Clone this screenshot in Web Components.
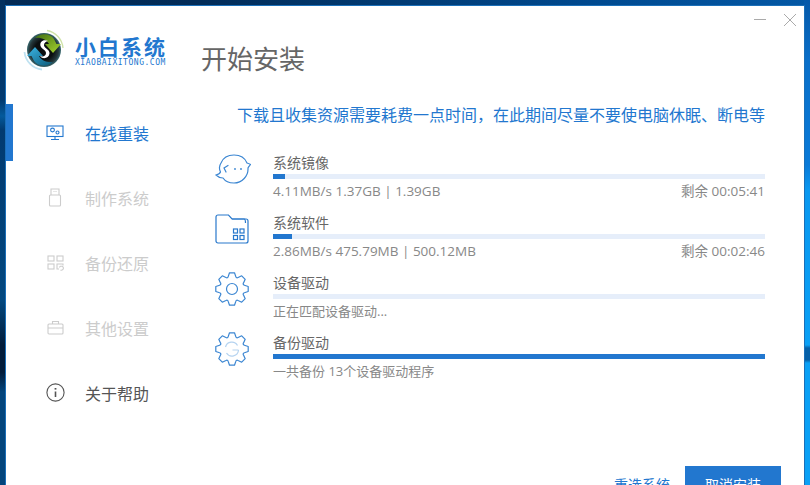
<!DOCTYPE html>
<html lang="zh">
<head>
<meta charset="utf-8">
<title>小白系统</title>
<style>
  html, body { margin: 0; height: 100%; overflow: hidden; }
  body {
    height: 485px;
    box-sizing: border-box;
    padding: 5px 5px 0 5px;
    font-family: "Open Sans", "Noto Sans CJK SC", sans-serif;
    background:
      linear-gradient(180deg, #0558a8 0, #0a6fc9 60px, #0a7ad8 165px, #0a98f0 190px, #0aa0f5 345px, #0560a8 348px, #0560a8 360px, #0aa0f5 363px) right top / 6px 100% no-repeat,
      linear-gradient(180deg, #03305f 0, #023a70 100px, #045a9c 116px, #023a70 130px, #03487f 300px, #021c3a 345px, #021c3a 372px, #03457c 392px) left top / 5px 100% no-repeat,
      linear-gradient(90deg, #032a55 0, #022c58 200px, #004a90 600px, #0458a5 100%);
  }
</style>
</head>
<body>
<installer-window>
  <side-nav slot="nav">
    <nav-item active label="在线重装" icon="screen"></nav-item>
    <nav-item disabled label="制作系统" icon="usb"></nav-item>
    <nav-item disabled label="备份还原" icon="blocks"></nav-item>
    <nav-item disabled label="其他设置" icon="case"></nav-item>
    <nav-item label="关于帮助" icon="info"></nav-item>
  </side-nav>
  <task-row label="系统镜像" icon="face" progress="2.4" info="4.11MB/s 1.37GB | 1.39GB" remain="剩余 00:05:41"></task-row>
  <task-row label="系统软件" icon="folder" progress="3.9" info="2.86MB/s 475.79MB | 500.12MB" remain="剩余 00:02:46"></task-row>
  <task-row label="设备驱动" icon="gear" progress="0" info="正在匹配设备驱动..."></task-row>
  <task-row label="备份驱动" icon="gear-sync" progress="100" info="一共备份 13个设备驱动程序"></task-row>
</installer-window>

<script>
// eight teeth, same outline for both gear icons
function gearSvg(inner) {
  const pt = (a, r) => (17 + r * Math.cos(a)).toFixed(1) + ' ' + (17 + r * Math.sin(a)).toFixed(1);
  let d = '';
  for (let i = 0; i < 8; i++) {
    const a = (i * 45 - 90) * Math.PI / 180;
    d += (i ? 'L' : 'M') + pt(a - 0.3, 13) + 'L' + pt(a - 0.15, 16.4) + 'L' + pt(a + 0.15, 16.4) + 'L' + pt(a + 0.3, 13);
    d += 'Q' + pt(a + Math.PI / 8, 11.4) + ' ' + pt(a + Math.PI / 4 - 0.3, 13);
  }
  return `<svg width="34" height="34" viewBox="0 0 34 34" fill="none" stroke="#3b86d2" stroke-width="1.2" stroke-linejoin="round">
    <path d="${d}Z"/>${inner}</svg>`;
}

const ICONS = {
  screen: `<svg width="18" height="16" viewBox="0 0 18 16" fill="none" stroke="currentColor" stroke-width="1.1">
    <rect x="1" y="1" width="16" height="10.5"/><circle cx="6.5" cy="5" r="1.9"/><circle cx="11.5" cy="7.5" r="1.5"/><path d="M9 11.5V14.5M5 14.5H13"/></svg>`,
  usb: `<svg width="14" height="19" viewBox="0 0 14 19" fill="none" stroke="currentColor" stroke-width="1.1">
    <path d="M3 7V1H11V7"/><rect x="1.5" y="7" width="11" height="11" rx="1"/><path d="M5.5 3.5H6.5M7.5 3.5H8.5"/></svg>`,
  blocks: `<svg width="17" height="16" viewBox="0 0 17 16" fill="none" stroke="currentColor" stroke-width="1.1">
    <rect x="1" y="1" width="6" height="5"/><rect x="10" y="1" width="6" height="5"/><rect x="1" y="9" width="6" height="5"/><path d="M16 10.5V9H10V14H12"/><path d="M13.5 15a2 2 0 1 0 -1-2.5"/></svg>`,
  case: `<svg width="17" height="15" viewBox="0 0 17 15" fill="none" stroke="currentColor" stroke-width="1.1">
    <rect x="1" y="4" width="15" height="10" rx="1"/><path d="M5.5 4V1.5H11.5V4M1 8H16"/></svg>`,
  info: `<svg width="19" height="19" viewBox="0 0 19 19" fill="none" stroke="currentColor" stroke-width="1.1">
    <circle cx="9.5" cy="9.5" r="8.6"/><path d="M9.5 8.5V14" stroke-width="1.6"/><path d="M9.5 5V6.6" stroke-width="1.8"/></svg>`,
  face: `<svg width="36" height="30" viewBox="0 0 36 30" fill="none" stroke="#3b86d2" stroke-width="1.2">
    <path d="M6 9C8 4 13 1 19 1C25 1 30 4 32 9C33.5 9.5 35 10 35.5 10.5C34.5 12 33.5 13 33 14C33.5 22 27 29 19 29C14 29 10 27 8 24C5.5 24 3 23 1 21C3 20.5 5 19.5 5.5 18C4 15 4 12 6 9Z"/>
    <path d="M13 11.5L9 14L11 18" stroke-linecap="round"/><circle cx="20" cy="15" r=".9" fill="#3b86d2" stroke="none"/><circle cx="26" cy="15" r=".9" fill="#3b86d2" stroke="none"/></svg>`,
  folder: `<svg width="34" height="30" viewBox="0 0 34 30" fill="none" stroke="#2878cc" stroke-width="1.2">
    <path d="M1 3C1 1.8 1.8 1 3 1H13.5L17 5H31C32.2 5 33 5.8 33 7V27C33 28.2 32.2 29 31 29H3C1.8 29 1 28.2 1 27Z"/>
    <path d="M17 5H29C30 5 30.5 6 30.5 9"/>
    <rect x="18.5" y="15" width="4" height="4"/><rect x="25" y="15" width="4" height="4"/><rect x="18.5" y="21.5" width="4" height="4"/><rect x="25" y="21.5" width="4" height="4"/></svg>`,
  gear: gearSvg(`<circle cx="17" cy="17" r="5.5"/>`),
  'gear-sync': gearSvg(`<path d="M10.5 15A6.5 6.5 0 0 1 22.5 13.5" stroke="#b5d3f0"/><path d="M23.5 18H17.5M23.5 18A6.5 6.5 0 0 1 11.5 21" stroke="#b5d3f0"/>`)
};

class InstallerWindow extends HTMLElement {
  constructor() {
    super();
    this.attachShadow({ mode: 'open' });
    this.shadowRoot.innerHTML = `
      <style>
        :host {
          display: grid;
          grid-template-columns: 195px 1fr;
          height: 500px;
          background: #fff;
          border: 1px solid #1b6fb8;
          box-sizing: border-box;
          color: #666;
        }
        .brand { display: flex; align-items: center; gap: 9px; padding: 22px 0 0 16px; height: 44px; }
        .brand-text { color: #2277cf; display: flex; flex-direction: column; }
        .brand-name { font: 700 21px/24px "Noto Sans CJK SC", sans-serif; letter-spacing: 2px; }
        .brand-url { font: 8px/9px "DejaVu Sans Mono", monospace; letter-spacing: .53px; white-space: nowrap; }
        .main { padding: 0 39px 0 0; display: flex; flex-direction: column; }
        .title-row { display: flex; justify-content: space-between; height: 71px; }
        h1 { margin: 34px 0 0; font: 400 26px/36px "Noto Sans CJK SC", sans-serif; color: #666; }
        .win-btns { display: flex; gap: 18px; height: 12px; margin: 8px -31px 0 0; }
        .notice { margin: 25px 0 0; font-size: 16px; line-height: 24px; color: #2277cf; text-align: right; font-family: "Noto Sans CJK SC", sans-serif; }
        .tasks { margin: 27px 0 0 12px; display: flex; flex-direction: column; gap: 4px; }
        .actions { display: flex; justify-content: flex-end; align-items: center; gap: 15px; margin: 77px -16px 0 0; font: 14px "Noto Sans CJK SC", sans-serif; }
        .link { color: #2277cf; }
        .primary { width: 96px; height: 36px; background: #2277cf; color: #fff; text-align: center; line-height: 36px; }
      </style>
      <div>
        <div class="brand">
          <svg width="44" height="44" viewBox="0 0 44 44" aria-hidden="true">
            <defs>
              <radialGradient id="disc" cx=".5" cy=".5" r=".5">
                <stop offset=".55" stop-color="#0b0f10"/><stop offset=".85" stop-color="#25383c"/><stop offset="1" stop-color="#3a6a70"/>
              </radialGradient>
              <linearGradient id="green" x1="0" y1="0" x2="1" y2="1"><stop offset="0" stop-color="#3f6f12"/><stop offset="1" stop-color="#a9d52f"/></linearGradient>
              <linearGradient id="blue" x1="0" y1="0" x2="1" y2="1"><stop offset="0" stop-color="#3cb6e6"/><stop offset="1" stop-color="#0c5a78"/></linearGradient>
            </defs>
            <path d="M25 2.5A19.5 19.5 0 0 1 41 20" fill="none" stroke="#cfe3a8" stroke-width="1.3"/>
            <path d="M20 41.5A19.5 19.5 0 0 1 2.5 24" fill="none" stroke="#bfe2f1" stroke-width="1.8"/>
            <circle cx="22" cy="22" r="17" fill="url(#disc)"/>
            <path d="M13 10C18 5 28 5 32 11L34.5 16H39L31 25L23 16H27C25 12 19 9 13 10Z" fill="url(#green)"/>
            <path d="M31 34C26 39 16 39 12 33L9.5 28H5L13 19L21 28H17C19 32 25 35 31 34Z" fill="url(#blue)"/>
            <path d="M26 13C21 11 17.5 14 18.5 18C19.5 21 24 22 24 25C24 28 21 29 18 28C21 32 27 30 27.5 25.5C28 21.5 22.5 20.5 22 17.5C21.7 15 24 13.5 26 13Z" fill="#fff"/>
          </svg>
          <div class="brand-text">
            <span class="brand-name">小白系统</span>
            <span class="brand-url">XIAOBAIXITONG.COM</span>
          </div>
        </div>
        <slot name="nav"></slot>
      </div>
      <div class="main">
        <div class="title-row">
          <h1>开始安装</h1>
          <div class="win-btns">
            <svg width="12" height="12" viewBox="0 0 12 12" stroke="#aaa"><path d="M0 5.5H12"/></svg>
            <svg width="12" height="12" viewBox="0 0 12 12" stroke="#aaa"><path d="M0 0L12 12M12 0L0 12"/></svg>
          </div>
        </div>
        <p class="notice">下载且收集资源需要耗费一点时间，在此期间尽量不要使电脑休眠、断电等</p>
        <div class="tasks"><slot></slot></div>
        <div class="actions">
          <span class="link">重选系统</span>
          <span class="primary">取消安装</span>
        </div>
      </div>
    `;
  }
}

class SideNav extends HTMLElement {
  constructor() {
    super();
    this.attachShadow({ mode: 'open' });
    this.shadowRoot.innerHTML = `
      <style>
        :host { display: flex; flex-direction: column; gap: 8px; margin-top: 32px; }
      </style>
      <slot></slot>
    `;
  }
}

class NavItem extends HTMLElement {
  constructor() {
    super();
    this.attachShadow({ mode: 'open' });
    this.shadowRoot.innerHTML = `
      <style>
        :host {
          display: grid;
          grid-template-columns: 40px 1fr;
          align-items: center;
          height: 57px;
          padding-left: 39px;
          box-sizing: border-box;
          color: #555;
          font: 16px "Noto Sans CJK SC", sans-serif;
        }
        :host([active]) { border-left: 7px solid #2277cf; color: #2277cf; padding-left: 32px; }
        :host([disabled]) { color: #ccc; }
        .icon { display: flex; justify-content: center; width: 20px; }
      </style>
      <span class="icon">${ICONS[this.getAttribute('icon')]}</span>
      <span>${this.getAttribute('label')}</span>
    `;
  }
}

class TaskRow extends HTMLElement {
  constructor() {
    super();
    this.attachShadow({ mode: 'open' });
    const remain = this.getAttribute('remain') || '';
    this.shadowRoot.innerHTML = `
      <style>
        :host {
          display: grid;
          grid-template-columns: 60px 1fr;
          height: 56px;
          color: #888;
        }
        .icon { display: flex; align-items: center; padding-left: 2px; height: 32px; }
        .label { color: #666; height: 20px; font: 14px/18px "Noto Sans CJK SC", sans-serif; }
        .bar { height: 5px; margin-top: 1px; background: #e6eefa; }
        .fill { height: 100%; background: #2277cf; }
        .meta { display: flex; justify-content: space-between; line-height: 20px; margin-top: 2px; font-size: 13px; }
        :host([remain]) .meta { font-size: 13.5px; }
      </style>
      <span class="icon">${ICONS[this.getAttribute('icon')]}</span>
      <div>
        <div class="label">${this.getAttribute('label')}</div>
        <div class="bar"><div class="fill" style="width:${this.getAttribute('progress')}%"></div></div>
        <div class="meta"><span>${this.getAttribute('info')}</span><span>${remain}</span></div>
      </div>
    `;
  }
}

customElements.define('installer-window', InstallerWindow);
customElements.define('side-nav', SideNav);
customElements.define('nav-item', NavItem);
customElements.define('task-row', TaskRow);
</script>
</body>
</html>
